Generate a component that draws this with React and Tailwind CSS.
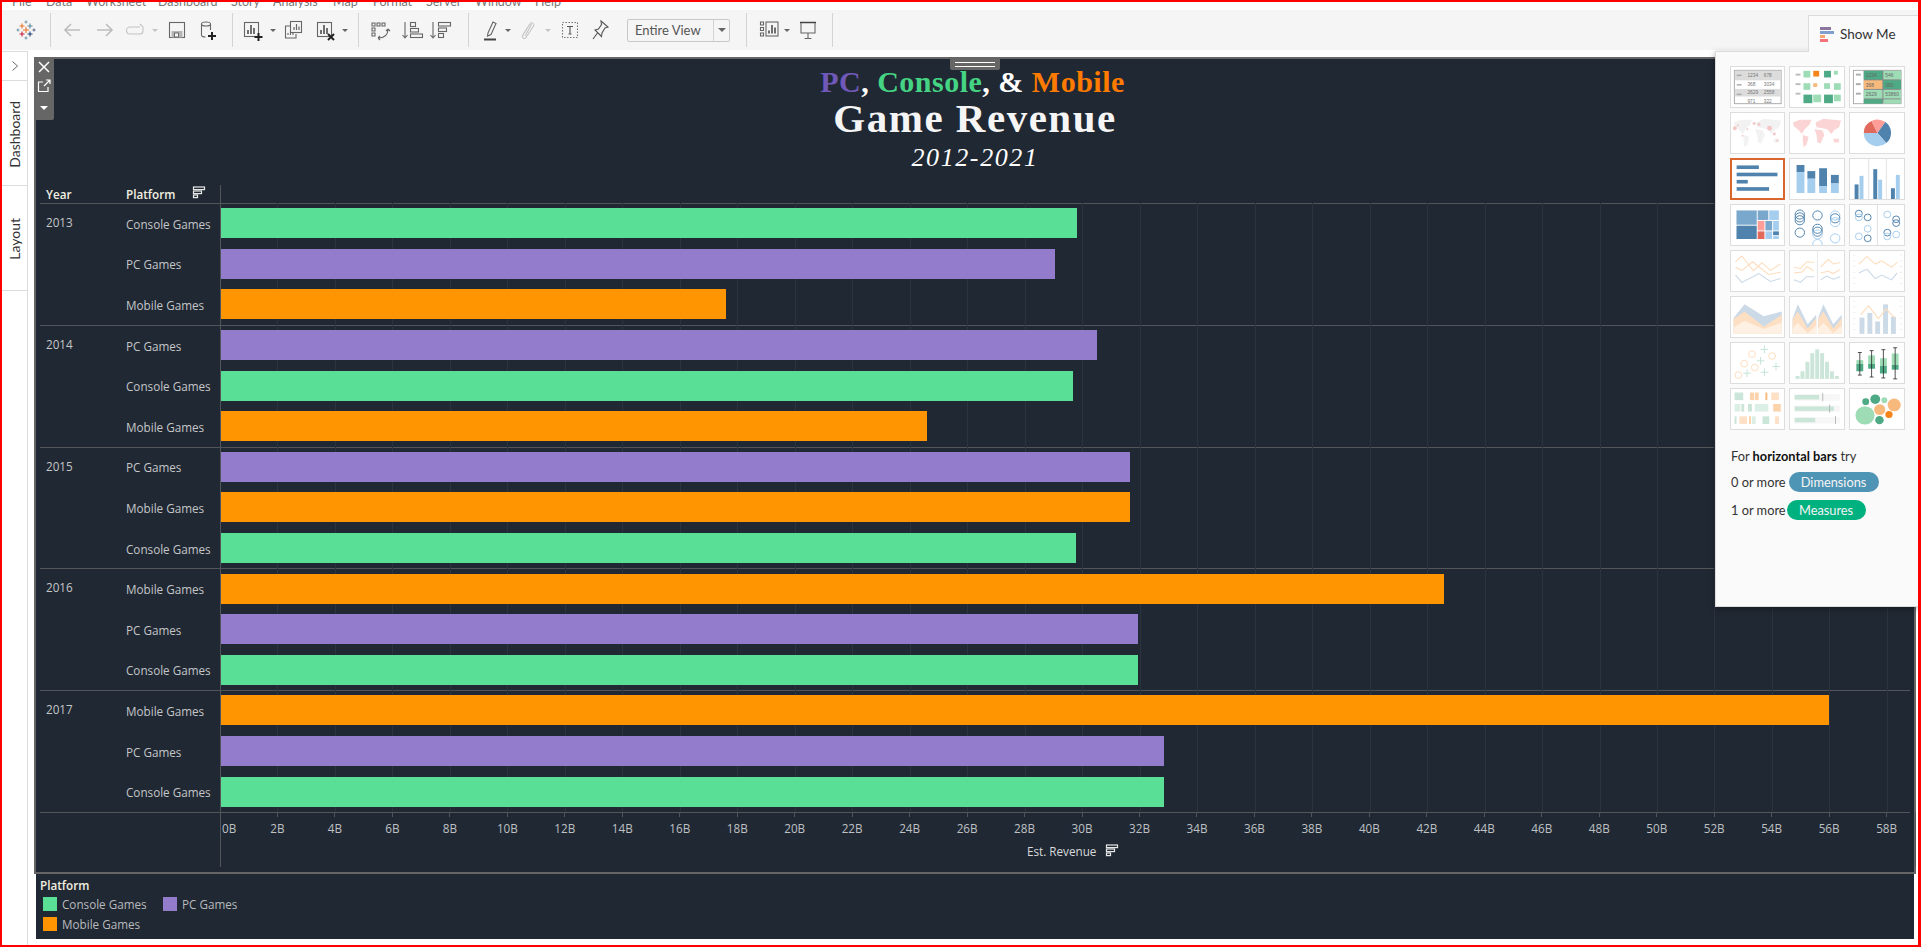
const PX = 28.72
const TICK = 28.74
const GREEN = '#5adf97'
const PURPLE = '#937ccb'
const ORANGE = '#ff9500'

const sections = [
  { year: 2013, rows: [['Console Games', 29.8, GREEN], ['PC Games', 29.04, PURPLE], ['Mobile Games', 17.58, ORANGE]] },
  { year: 2014, rows: [['PC Games', 30.5, PURPLE], ['Console Games', 29.67, GREEN], ['Mobile Games', 24.58, ORANGE]] },
  { year: 2015, rows: [['PC Games', 31.65, PURPLE], ['Mobile Games', 31.65, ORANGE], ['Console Games', 29.77, GREEN]] },
  { year: 2016, rows: [['Mobile Games', 42.58, ORANGE], ['PC Games', 31.93, PURPLE], ['Console Games', 31.93, GREEN]] },
  { year: 2017, rows: [['Mobile Games', 55.99, ORANGE], ['PC Games', 32.83, PURPLE], ['Console Games', 32.83, GREEN]] },
]

const ticks = Array.from({ length: 30 }, (_, i) => i * 2)
const menu = [['File', 'w-[34px]'], ['Data', 'w-[40px]'], ['Worksheet', 'w-[72px]'], ['Dashboard', 'w-[73px]'], ['Story', 'w-[42px]'], ['Analysis', 'w-[60px]'], ['Map', 'w-[40px]'], ['Format', 'w-[53px]'], ['Server', 'w-[49px]'], ['Window', 'w-[60px]'], ['Help', 'w-[40px]']]

function SortIcon({ className = '' }) {
  return (
    <svg className={className} width="15" height="14" viewBox="0 0 15 14" fill="none" stroke="#e8e8e8" strokeWidth="1.2">
      <rect x="1.5" y="1" width="11" height="2.6" />
      <rect x="1.5" y="5" width="8" height="2.6" />
      <rect x="1.5" y="9" width="4" height="2.6" />
    </svg>
  )
}

function Plus({ x, y }) {
  return <path d={`M${x - 4} ${y}h8M${x} ${y - 4}v8`} stroke="#222" strokeWidth="2" fill="none" />
}

function Tool({ className = '', children }) {
  return (
    <div className={`w-[24px] h-[24px] shrink-0 ${className}`}>
      <svg width="24" height="24" viewBox="0 0 24 24" fill="none" stroke="#666" strokeWidth="1.1">{children}</svg>
    </div>
  )
}

function Caret({ className = '', light }) {
  return (
    <div className={`w-[8px] flex justify-center shrink-0 ${className}`}>
      <div className={`w-0 h-0 border-x-[3px] border-x-transparent border-t-[3px] ${light ? 'border-t-[#c4c4c4]' : 'border-t-[#666]'}`} />
    </div>
  )
}

function Divider({ className = '' }) {
  return <div className={`w-px h-[34px] bg-[#d4d4d4] shrink-0 ${className}`} />
}

function TableauLogo() {
  const marks = [
    [3, 8, '#e8762b', 2.5], [11, 8, '#5b879b', 2.5], [7, 12, '#e8762b', 3], [3, 16, '#c72035', 2.5], [11, 16, '#1f447a', 2.5],
    [7, 4, '#7099a6', 1.5], [7, 20, '#7099a6', 1.5], [-1, 12, '#7099a6', 1.5], [15, 12, '#5b6591', 1.5],
  ]
  return (
    <svg width="20" height="24" viewBox="-3 0 20 24" fill="none">
      {marks.map(([x, y, c, s], i) => (
        <path key={i} d={`M${x - s} ${y}h${s * 2}M${x} ${y - s}v${s * 2}`} stroke={c} strokeWidth="1.1" />
      ))}
    </svg>
  )
}

function Toolbar() {
  return (
    <div className="h-[40px] bg-[#f5f5f5] flex items-center shrink-0 relative">
      <div className="w-[48px] flex justify-center shrink-0"><TableauLogo /></div>
      <Divider />
      <Tool className="ml-[9px]"><path d="M20 12H5M11 6l-6 6 6 6" stroke="#bdbdbd" strokeWidth="1.6" /></Tool>
      <Tool className="ml-[9px]"><path d="M4 12h15M13 6l6 6-6 6" stroke="#bdbdbd" strokeWidth="1.6" /></Tool>
      <Tool className="ml-[6px]"><path d="M17 9H7a3 3 0 0 0 0 7h10a3 3 0 0 0 3-3V9M17 6l3 3" stroke="#c4c4c4" /></Tool>
      <Caret light className="ml-[4px]" />
      <Tool className="ml-[6px]"><rect x="4.5" y="4.5" width="15" height="15" /><rect x="6.5" y="13" width="11" height="6.5" fill="#b5b5b5" stroke="none" /><rect x="9.5" y="15" width="4" height="4" fill="#f5f5f5" stroke="#555" strokeWidth=".8" /></Tool>
      <Tool className="ml-[6px]"><ellipse cx="11" cy="6" rx="4.5" ry="2" /><path d="M6.5 6v11c0 1.5 2 2 4 2M15.5 6v6" /><Plus x={17} y={18} /></Tool>
      <Divider className="ml-[13px]" />
      <Tool className="ml-[7px]"><rect x="4.5" y="4.5" width="14" height="14" /><path d="M8 16v-4M11 16V7M14 16v-6" stroke="#444" strokeWidth="1.5" /><Plus x={18.5} y={19} /></Tool>
      <Caret className="ml-[5px]" />
      <Tool className="ml-[4px]"><rect x="9.5" y="3.5" width="11" height="11" fill="#f5f5f5" /><path d="M13 12v-3M15.5 12V6M18 12V8.5" strokeWidth="1.2" /><path d="M9 8H4.5v12H15v-4" /><path d="M7 17v-2M9.5 17v-3M12 17v-2" strokeWidth="1.1" /></Tool>
      <Tool className="ml-[8px]"><rect x="4.5" y="4.5" width="14" height="14" /><path d="M8 16v-4M11 16V7M14 16v-6" stroke="#444" strokeWidth="1.5" /><path d="M15 16l6 6M21 16l-6 6" stroke="#222" strokeWidth="2" /></Tool>
      <Caret className="ml-[4px]" />
      <Divider className="ml-[9px]" />
      <Tool className="ml-[9px]"><path d="M4 5h3v3H4zM9 5h3v3H9zM14 5h3v3h-3zM4 10h3v3H4zM4 15h3v3H4z" /><path d="M20 11c0 6-4 9-10 9M20 11l-2 2M20 11l2 2M10 20l2-2M10 20l2 2" /></Tool>
      <Tool className="ml-[9px]"><path d="M4 4v15M1.5 17L4 20l2.5-3" /><rect x="9.5" y="4.5" width="5" height="4" /><rect x="9.5" y="10.5" width="8" height="3.5" /><rect x="9.5" y="16" width="12" height="3.5" /></Tool>
      <Tool className="ml-[4px]"><path d="M4 4v15M1.5 17L4 20l2.5-3" /><rect x="9.5" y="4.5" width="12" height="3.5" /><rect x="9.5" y="10" width="8" height="3.5" /><rect x="9.5" y="15.5" width="5" height="4" /></Tool>
      <Divider className="ml-[15px]" />
      <Tool className="ml-[9px]"><path d="M10 15l5-11 3 1.5-5 11-3.5 1.5z" /><path d="M6 21.5h12" stroke="#444" strokeWidth="2" /></Tool>
      <Caret className="ml-[2px]" />
      <Tool className="ml-[4px]"><path d="M7 17l7-11c1.5-2.5 5-.5 3.5 2l-7.5 11.5c-1.5 2-4.5.5-3.5-2l7-11c.8-1 2 0 1.5 1L9 18" stroke="#c4c4c4" /></Tool>
      <Caret light className="ml-[4px]" />
      <Tool className="ml-[6px]"><rect x="4.5" y="4.5" width="15" height="15" strokeDasharray="1.5 1.5" stroke="#777" /><path d="M9 8.5h6M12 8.5v7.5M10.5 16h3" stroke="#555" /></Tool>
      <Tool className="ml-[6px]"><path d="M13 3l7 6-3 1-3 5-.5 3.5L7 12l3.5-1 3-4.5zM9.5 15L5 21" stroke="#555" /></Tool>
      <div className="ml-[15px] w-[103px] h-[23px] border border-[#c8c8c8] rounded-[2px] flex items-center shrink-0">
        <span className="pl-[7px] w-[85px] text-[13px] leading-none text-[#555] font-['Lato',sans-serif]">Entire View</span>
        <div className="w-px h-full bg-[#d4d4d4]" />
        <div className="flex-1 flex justify-center"><div className="w-0 h-0 border-x-[4px] border-x-transparent border-t-[4px] border-t-[#666]" /></div>
      </div>
      <Divider className="ml-[16px]" />
      <Tool className="ml-[11px]"><path d="M2.5 4h3v3h-3zM2.5 9.5h3v3h-3zM2.5 15h3v3h-3z" /><rect x="8" y="4" width="12" height="14" /><path d="M11 15.5v-3M14 15.5V7M17 15.5v-6" stroke="#444" strokeWidth="1.5" /></Tool>
      <Caret className="ml-[1px]" />
      <Tool className="ml-[5px]"><path d="M4 4.5h16" stroke="#444" strokeWidth="1.5" /><path d="M5 5v10h14V5M12 15v5M8.5 20.5h7" /></Tool>
      <Divider className="ml-[12px]" />
    </div>
  )
}

const BD = '#4f82ad'
const BL = '#a5cdee'
const GD = '#4eaa84'
const GL = '#9edcb6'
const OD = '#f58518'
const OL = '#f7b97c'
const LO = '#fdddbd'
const LB = '#c9d8e8'
const PG = '#cbe5d9'

const R = ({ x, y, w, h, f }) => <rect x={x} y={y} width={w} height={h} fill={f} />
const L = ({ p, c }) => <polyline points={p} fill="none" stroke={c} strokeWidth="1.1" />
const P = ({ p, c }) => <polygon points={p} fill={c} />

function WorldMap({ c }) {
  return (
    <g fill={c}>
      <path d="M3 10L10 7L22 7L20 12L15 17L12 22L9 18L4 14Z" />
      <path d="M13 23L19 25L17 33L14 36L13 29Z" />
      <path d="M26 10L34 6L52 8L50 15L45 18L42 22L38 17L33 16L27 15Z" />
      <path d="M25 17L33 18L35 23L31 32L28 31L27 23Z" />
      <path d="M44 27L50 27L50 31L45 31Z" />
    </g>
  )
}

const tableRows = [['1234', '678'], ['368', '3034'], ['2629', '2558'], ['971', '322']]
const heatCells = [
  [13.7, 4, 7, GL], [23.7, 4, 6, OD], [34.7, 4, 7, GD], [44.7, 4, 4, GL],
  [13.7, 17, 7, GL], [23.7, 17, 4, OL], [34.7, 17, 6, GL], [44.7, 17, 7, GL],
  [13.7, 29, 9, GD], [23.7, 29, 8, GL], [34.7, 29, 9, GD], [44.7, 29, 7, GL],
]
const highlight = [[GD, GL], [OL, GD], [GL, GL], [GD, GL]]

const thumbs = [
  <g key="1">
    <rect x="3.5" y="3.5" width="48.5" height="35" fill="none" stroke="#aaa" />
    <R x={4} y={4} w={48} h={10} f="#dcdcdc" /><R x={4} y={23} w={48} h={8} f="#dcdcdc" />
    {tableRows.map((r, i) => (
      <g key={i} fontSize="5" fill="#777" fontFamily="Liberation Sans, sans-serif">
        {i < 3 && <R x={6} y={8 + i * 10} w={5} h={1.5} f="#aaa" />}
        <text x="17" y={10.5 + i * 9}>{r[0]}</text>
        <text x="34" y={10.5 + i * 9}>{r[1]}</text>
      </g>
    ))}
  </g>,
  <g key="2">
    {[8, 18, 28].map(y => <R key={y} x={5.7} y={y - 1} w={5} h={2} f="#bbb" />)}
    {heatCells.map(([x, y, s, f], i) => <R key={i} x={x} y={y} w={s} h={s} f={f} />)}
  </g>,
  <g key="3">
    <rect x="3.5" y="3.5" width="48.5" height="35" fill="#888" stroke="#aaa" />
    <R x={4} y={4} w={10} h={34} f="#fff" />
    {[8, 18, 28].map(y => <R key={y} x={6} y={y - 1} w={5} h={2} f="#aaa" />)}
    {highlight.map((r, i) => (
      <g key={i} fontSize="5" fill="#666" fontFamily="Liberation Sans, sans-serif">
        <R x={14} y={4 + i * 10} w={19} h={i === 3 ? 4.5 : 9} f={r[0]} />
        <R x={34} y={4 + i * 10} w={18} h={i === 3 ? 4.5 : 9} f={r[1]} />
        {i < 3 && <text x="16" y={10.5 + i * 10}>{['1234', '368', '2629'][i]}</text>}
        {i < 3 && <text x="36" y={10.5 + i * 10}>{['546', '380', '53860'][i]}</text>}
      </g>
    ))}
  </g>,
  <g key="4">
    <WorldMap c="#f2f2f2" />
    {[[4, 16, 2], [24, 11, 1.5], [7, 13, 1], [40, 16, 2.5], [29, 12, 1.5], [12, 24, 1], [45, 22, 1.5], [48, 29, 1.2], [17, 17, 1]].map(([x, y, r], i) => (
      <circle key={i} cx={x} cy={y} r={r} fill="#f3c5c5" />
    ))}
  </g>,
  <g key="5"><WorldMap c="#fbd5d5" /></g>,
  <g key="6">
    <path d="M28 21L14 21A14 14 0 0 1 22 8.3Z" fill="#e26a5c" />
    <path d="M28 21L22 8.3A14 14 0 0 1 36 9.5Z" fill="#ff9d98" />
    <path d="M28 21L36 9.5A14 14 0 0 1 37 31.5Z" fill={BD} />
    <path d="M28 21L37 31.5A14 14 0 0 1 14 21Z" fill={BL} />
  </g>,
  <g key="7" fill={BD}>
    <rect x="5" y="6" width="24" height="4" /><rect x="5" y="14" width="44" height="4" />
    <rect x="5" y="22" width="12" height="4" /><rect x="5" y="30" width="35" height="4" />
  </g>,
  <g key="8">
    {[[6.7, 6.3, 13.7], [17.7, 12.7, 20.7], [29.7, 9.7, 28.7], [41.7, 16.7, 25.7]].map(([x, a, b]) => (
      <g key={x}><R x={x} y={a} w={8} h={b - a} f={BD} /><R x={x} y={b} w={8} h={35.7 - b} f={BL} /></g>
    ))}
  </g>,
  <g key="9">
    <path d="M19 0v42M37 0v42" stroke="#d8d8d8" strokeWidth=".8" />
    {[[4.7, 26.7, BD], [9.7, 17.7, BL], [23.7, 10.7, BD], [28.7, 21.7, BL], [41.7, 30.7, BD], [46.7, 16.7, BL]].map(([x, y, f]) => (
      <R key={x} x={x} y={y} w={4} h={42 - y} f={f} />
    ))}
  </g>,
  <g key="10">
    <R x={5.7} y={5.7} w={21} h={15} f="#7aa7cc" /><R x={5.7} y={21.7} w={21} h={14} f={BD} />
    <R x={27.7} y={5.7} w={11} h={10} f="#7aa7cc" /><R x={39.7} y={5.7} w={10} h={10} f={BL} />
    <R x={27.7} y={16.7} w={7} h={10} f="#ff9d98" /><R x={27.7} y={27.7} w={7} h={8} f="#e26a5c" />
    <R x={35.7} y={16.7} w={7} h={10} f="#7aa7cc" /><R x={43.7} y={16.7} w={6} h={10} f={BL} />
    <R x={35.7} y={27.7} w={7} h={8} f={BL} /><R x={43.7} y={27.7} w={6} h={4} f={BD} /><R x={43.7} y={32.7} w={6} h={3} f={BL} />
  </g>,
  <g key="11" fill="none" strokeWidth="1">
    {[[10, 10, BD], [10, 13, BD], [10, 16, BD], [28, 11, BD], [46, 11, BL], [46, 14, BD], [46, 18, BL], [10, 29, BD], [28, 25, BD], [28, 28, BD], [28, 31, BL], [46, 35, BL], [28, 41, BL]].map(([x, y, c], i) => (
      <circle key={i} cx={x} cy={y} r="4.8" stroke={c} />
    ))}
  </g>,
  <g key="12" fill="none" strokeWidth="1">
    <path d="M28 0v42" stroke="#d8d8d8" strokeWidth=".8" />
    {[[9, 9, BD], [9, 13, BL], [18, 13, BD], [18, 25, BL], [9, 33, BL], [18, 35, BD], [38, 10, BL], [47, 15, BD], [47, 19, BD], [38, 29, BD], [38, 33, BL], [47, 31, BL]].map(([x, y, c], i) => (
      <circle key={i} cx={x} cy={y} r="3.5" stroke={c} />
    ))}
  </g>,
  <g key="13">
    <L p="4.7,11.3 11.3,5.3 23.3,20.7 32.3,12.3 40.7,20.3 51.3,13.7" c={LO} />
    <L p="4.7,17 11.3,20.3 22.3,11.3 39,24.7 51.3,22.3" c={LO} />
    <L p="4.7,25.3 11.3,33 29,23.7 40.7,32 51.3,29" c={LB} />
  </g>,
  <g key="14">
    <path d="M28 0v42" stroke="#e2e2e2" strokeWidth=".8" />
    <L p="4,17 10.7,18.3 17.3,11.3 24.7,12" c={LO} /><L p="4,23 12.3,22 17.3,16.3 24,21" c={LO} /><L p="4,30.3 10.7,33 16.7,27 24.7,27" c={LB} />
    <L p="31.3,17 39,8.7 44,13.7 51.3,12" c={LO} /><L p="31.3,23 39,21.3 44,23.7 51.3,19.3" c={LO} /><L p="31.3,30.3 37.3,26.3 44,29.7 51.3,27" c={LB} />
  </g>,
  <g key="15">
    {[4, 10, 16, 22, 28, 34].map(y => <g key={y}><R x={3} y={y} w={2.5} h={.6} f="#e4e4e4" /><R x={50.5} y={y} w={3} h={.6} f="#e4e4e4" /></g>)}
    <L p="9,13.7 17.3,5.7 25.7,13.7 32.3,10.3 42.3,17 48,12" c={LO} />
    <L p="9,23 17.3,19 25.7,29 32.3,25.3 42.3,30.3 48,23" c={LB} />
  </g>,
  <g key="16">
    <P p="2.7,22 14,7.7 34,20.3 52.7,15.3 52.7,38.7 2.7,38.7" c="#ccd9e6" />
    <P p="2.7,23 14,15.3 34,31 52.7,18.7 52.7,38.7 2.7,38.7" c="#fddfc4" />
    <P p="2.7,32 14,25.3 34,33.7 52.7,27 52.7,38.7 2.7,38.7" c="#fef1e3" />
  </g>,
  <g key="17">
    {[0, 26].map(d => (
      <g key={d} transform={`translate(${d} 0)`}>
        <P p="2.7,22 8,7.7 18,28.7 26.7,18.7 26.7,38.7 2.7,38.7" c="#ccd9e6" />
        <P p="2.7,23 8,15.3 18,33 26.7,22 26.7,38.7 2.7,38.7" c="#fddfc4" />
        <P p="2.7,33 8,27 18,38 26.7,30 26.7,38.7 2.7,38.7" c="#fef1e3" />
      </g>
    ))}
  </g>,
  <g key="18">
    {[4, 10, 16, 22, 28, 34].map(y => <g key={y}><R x={3} y={y} w={2.5} h={.6} f="#e4e4e4" /><R x={50.5} y={y} w={3} h={.6} f="#e4e4e4" /></g>)}
    {[[9.7, 21.7], [17.7, 16.7], [25.7, 25.7], [33.7, 7.7], [41.7, 20.7]].map(([x, y]) => <R key={x} x={x} y={y} w={5} h={38.7 - y} f="#ccd9e6" />)}
    <L p="10.7,18.7 19,9.3 29,22.7 36.7,12.7 45.7,22" c={LO} />
  </g>,
  <g key="19" fill="none" strokeWidth="1">
    {[[21.7, 11.7], [42.7, 13.7], [13.7, 21.7], [24.7, 25.7], [7.7, 33.7]].map(([x, y]) => <circle key={x} cx={x} cy={y} r="3.5" stroke={LO} />)}
    {[[34.7, 6.7], [30.7, 18.7], [46.7, 24.7], [16.7, 31.7], [34.7, 30.7]].map(([x, y]) => <path key={x} d={`M${x - 4} ${y}h8M${x} ${y - 4}v8`} stroke="#c3e3d5" />)}
  </g>,
  <g key="20">
    {[34.7, 29.7, 19.7, 10.7, 6.7, 10.7, 19.7, 29.7, 34.7].map((y, i) => <R key={i} x={5.7 + i * 5} y={y} w={4} h={37.7 - y} f={PG} />)}
  </g>,
  <g key="21">
    {[[10, 10, 33.7, 18, 22, 29.7], [22, 8, 35.7, 13, 22, 27], [34, 7, 36.7, 16, 24, 32], [46, 5, 37.7, 11, 23, 28]].map(([x, a, b, t, m, e]) => (
      <g key={x}>
        <R x={x - 3.5} y={t} w={7} h={m - t} f={GL} /><R x={x - 3.5} y={m} w={7} h={e - m} f={GD} />
        <path d={`M${x} ${a}V${b}M${x - 2} ${a}h4M${x - 2} ${b}h4`} stroke="#222" strokeWidth=".8" fill="none" />
      </g>
    ))}
  </g>,
  <g key="22">
    <R x={3.7} y={3.7} w={9} h={8} f={PG} /><R x={19.7} y={3.7} w={4.3} h={8} f="#fbd4ae" /><R x={24.7} y={3.7} w={4} h={8} f="#fbd4ae" /><R x={35.7} y={3.7} w={2} h={8} f={OL} /><R x={41.7} y={3.7} w={8} h={8} f="#fde0c6" />
    <R x={3.7} y={15.7} w={6} h={8} f="#dcefe6" /><R x={10.7} y={15.7} w={3} h={8} f={PG} /><R x={17.7} y={15.7} w={4} h={8} f={PG} /><R x={24.7} y={15.7} w={14} h={8} f="#dcefe6" /><R x={43.7} y={15.7} w={8} h={8} f="#fbd4ae" />
    <R x={3.7} y={28.7} w={2} h={8} f={PG} /><R x={8.7} y={28.7} w={8} h={8} f="#fde0c6" /><R x={18.7} y={28.7} w={2} h={8} f="#fbd4ae" /><R x={21.7} y={28.7} w={4} h={8} f="#dcefe6" /><R x={32.7} y={28.7} w={7} h={8} f={PG} /><R x={45.7} y={28.7} w={4} h={8} f="#fde0c6" />
  </g>,
  <g key="23">
    {[[6.3, 25, 33], [18.3, 40, 40], [30.3, 21, 46]].map(([y, w, t]) => (
      <g key={y}>
        <R x={4.7} y={y - 1} w={46} h={7} f="#f7f7f7" />
        <R x={4.7} y={y} w={w} h={4.7} f={PG} />
        <R x={t} y={y - 2} w={.8} h={8.5} f="#aaa" />
      </g>
    ))}
  </g>,
  <g key="24">
    {[[15.3, 27.7, 9.7, GL], [16, 13.3, 3.5, GD], [25.7, 10.7, 5, GD], [35, 11.7, 3, GL], [30.3, 21.7, 5.7, OL], [45, 16.7, 6.7, OL], [39.7, 26.7, 3.7, OD], [30, 32.7, 4.3, GD]].map(([x, y, r, f]) => (
      <circle key={x} cx={x} cy={y} r={r} fill={f} />
    ))}
  </g>,
]

function ShowMe() {
  return (
    <div className="absolute right-0 top-[-35px] z-30 w-[203px] flex flex-col items-end font-['Lato',sans-serif]">
      <div className="relative z-10 -mb-px w-[110px] h-[37px] bg-[#fafafa] border-l border-t border-[#dcdcdc] flex items-center pl-[11px] gap-[6px]">
        <div className="w-[14px] flex flex-col gap-px">
          <div className="h-[3px] w-[11px] bg-[#8b76a0]" />
          <div className="h-[3px] w-[14px] bg-[#7fa0cc]" />
          <div className="h-[3px] w-[5px] bg-[#f7a470]" />
          <div className="h-[3px] w-[8px] bg-[#f4737a]" />
        </div>
        <span className="text-[13.5px] text-[#333]">Show Me</span>
      </div>
      <div className="w-[203px] h-[556px] bg-[#fafafa] border-l border-t border-b border-[#dcdcdc] shadow-[0_2px_6px_rgba(0,0,0,0.35)] pt-[14px] pl-[14px]">
        <div className="grid grid-cols-[55px_56px_56px] auto-rows-[42px] gap-x-[4px] gap-y-[4px]">
          {thumbs.map((t, i) => (
            <div key={i} className={`bg-white overflow-hidden ${i === 6 ? 'border-2 border-[#d9662e]' : 'border border-[#dddddd]'}`}>
              <svg className="block w-full h-full" viewBox="0 0 55 42" preserveAspectRatio="none">{t}</svg>
            </div>
          ))}
        </div>
        <div className="mt-[18px] pl-[1px] text-[12.8px] leading-[16px] text-[#333]">
          <p>For <b className="font-bold text-[#111]">horizontal bars</b> try</p>
          <div className="mt-[8px] flex items-center gap-[3px] h-[20px]">
            <span>0 or more</span>
            <span className="h-[20px] w-[90px] rounded-full bg-[#4e94b4] text-[#f4f4f4] flex items-center justify-center">Dimensions</span>
          </div>
          <div className="mt-[8px] flex items-center gap-[3px] h-[20px]">
            <span>1 or more</span>
            <span className="-ml-[2px] h-[20px] w-[79px] rounded-full bg-[#00b180] text-[#f4f4f4] flex items-center justify-center">Measures</span>
          </div>
        </div>
      </div>
    </div>
  )
}

function Sidebar() {
  return (
    <div className="w-[26px] shrink-0 border-r border-[#dcdcdc] mt-px flex flex-col text-[14px] text-[#333] font-['Lato',sans-serif]">
      <div className="h-[29px] border-t border-[#dcdcdc] flex items-center justify-center">
        <svg width="8" height="12" viewBox="0 0 8 12" fill="none" stroke="#666"><path d="M1.5 1.5L6.5 6l-5 4.5" /></svg>
      </div>
      <div className="h-[105px] border-t border-[#dcdcdc] flex items-center justify-center">
        <span className="[writing-mode:vertical-rl] rotate-180 translate-y-px">Dashboard</span>
      </div>
      <div className="h-[106px] border-y border-[#dcdcdc] flex items-center justify-center">
        <span className="[writing-mode:vertical-rl] rotate-180 translate-y-px">Layout</span>
      </div>
    </div>
  )
}

function PanelControls() {
  return (
    <div className="absolute left-[-2px] top-0 z-20 w-[20px] h-[61px] bg-[#666] rounded-br-[2px] flex flex-col items-center pt-[1px] gap-[5px]">
      <svg width="14" height="14" viewBox="0 0 14 14" fill="none" stroke="#fff" strokeWidth="1.5"><path d="M2 2l10 10M12 2L2 12" /></svg>
      <svg width="14" height="14" viewBox="0 0 14 14" fill="none" stroke="#fff" strokeWidth="1.2"><path d="M6 3H1.5v9.5H11V8M7 7l6-6M9 1h4v4" /></svg>
      <div className="mt-[8px] w-0 h-0 border-x-[4px] border-x-transparent border-t-[4px] border-t-white" />
    </div>
  )
}

function Section({ year, rows }) {
  return (
    <div className="h-[121.8px] flex shadow-[inset_0_1px_0_#52565b]">
      <div className="w-[86px] pl-[6px] pt-[11px] text-[11.7px] leading-[16px] text-[#c4c6c8] shrink-0">{year}</div>
      <div className="flex-1 flex flex-col">
        {rows.map(([name, value, color]) => (
          <div key={name} className="h-[40.6px] flex items-center">
            <div className="w-[94px] pt-[1px] text-[11.7px] leading-[16px] text-[#c4c6c8] shrink-0 whitespace-nowrap">{name}</div>
            <div className="flex-1 h-full border-l border-[#52565b] flex items-center">
              <div className="h-[30px] relative z-10" style={{ width: value * PX, backgroundColor: color }} />
            </div>
          </div>
        ))}
      </div>
    </div>
  )
}

function Chart() {
  return (
    <div className="relative ml-[4px] w-[1870px] font-['Open_Sans',sans-serif]">
      {/* grid lines run under the bars */}
      <div className="absolute left-[180px] top-[18px] h-[609px]">
        {ticks.slice(1).map(t => (
          <div key={t} className="absolute top-0 bottom-0 w-px bg-[#2b333e]" style={{ left: t * TICK }} />
        ))}
      </div>
      <div className="h-[18px] flex pt-[1px] text-[11.7px] leading-[16px] text-[#f3efe0]">
        <div className="w-[86px] pl-[6px] font-semibold">Year</div>
        <div className="w-[94px] flex items-start gap-[17px] font-semibold">Platform<SortIcon /></div>
        <div className="flex-1 border-l border-[#52565b] -mt-[1px]" />
      </div>
      {sections.map(s => <Section key={s.year} {...s} />)}
      <div className="h-[55px] shadow-[inset_0_1px_0_#52565b] flex">
        <div className="w-[180px] shrink-0" />
        <div className="flex-1 border-l border-r border-[#52565b]">
          <div className="flex text-[11.7px] leading-[16px] text-[#bfc1c4]">
            {ticks.map(t => (
              <div key={t} className={`flex flex-col shrink-0 ${t === 0 ? 'w-[27.74px] items-start' : 'w-[57.48px] items-center'}`}>
                <div className={`w-px h-[5px] ${t === 0 ? 'bg-transparent' : 'bg-[#52565b]'}`} />
                <span className={t === 0 ? 'mt-[3px] pl-[1px]' : 'mt-[3px]'}>{t}B</span>
              </div>
            ))}
          </div>
          <div className="mt-[7px] pl-[806px] flex items-center gap-[9px] text-[11.7px] leading-[16px] text-[#d8dadc] whitespace-nowrap">
            Est. Revenue<SortIcon />
          </div>
        </div>
      </div>
    </div>
  )
}

export default function App() {
  return (
    <div className="w-[1921px] h-[947px] overflow-hidden bg-white border-2 border-r-[3px] border-[#ff0000] flex flex-col">
      <div className="h-[8px] shrink-0 overflow-hidden">
        <div className="-mt-[9px] ml-[10px] flex text-[12.5px] leading-[18px] text-[#777] font-['Lato',sans-serif]">
          {menu.map(([m, c]) => <span key={m} className={`${c} shrink-0`}>{m}</span>)}
        </div>
      </div>
      <Toolbar />
      <div className="flex-1 flex relative min-h-0">
        <ShowMe />
        <Sidebar />
        <div className="ml-[6px] mr-[2px] flex-1 pt-[7px] flex flex-col min-w-0">
          <div className="relative h-[817px] bg-[#202833] border-2 border-[#666]">
            <PanelControls />
            <div className="absolute left-1/2 -translate-x-1/2 top-0 z-20 w-[50px] h-[11px] bg-[#666] rounded-b-[2px] flex flex-col items-center pt-[3px] gap-[3px]">
              <div className="w-[40px] h-px bg-white" />
              <div className="w-[40px] h-px bg-white" />
            </div>
            <div className="h-[126px] pt-[7px] text-center font-['Liberation_Serif',serif]">
              <div className="h-[32px] pr-[5px] text-[30px] leading-[32px] font-bold tracking-[0.5px] text-white">
                <span className="text-[#7058b8]">PC</span>, <span className="text-[#45d483]">Console</span>, &amp; <span className="text-[#ff7b00]">Mobile</span>
              </div>
              <div className="h-[40px] text-[41px] leading-[40px] font-bold tracking-[1.5px] text-[#f5f5f5]">Game Revenue</div>
              <div className="h-[40px] text-[26px] leading-[40px] italic tracking-[1.6px] text-white">2012-2021</div>
            </div>
            <Chart />
          </div>
          <div className="h-[65px] mx-[2px] bg-[#202833] pl-[4px] pt-[3px] text-[11.7px] leading-[16px] font-['Open_Sans',sans-serif]">
            <div className="font-semibold text-[#f3efe0]">Platform</div>
            <div className="mt-[4px] flex items-center h-[14px] text-[#b8babd]">
              <div className="ml-[3px] w-[14px] h-[14px] bg-[#5adf97]" />
              <span className="ml-[5px] w-[101px]">Console Games</span>
              <div className="w-[14px] h-[14px] bg-[#937ccb]" />
              <span className="ml-[5px]">PC Games</span>
            </div>
            <div className="mt-[6px] flex items-center h-[14px] text-[#b8babd]">
              <div className="ml-[3px] w-[14px] h-[14px] bg-[#ff9500]" />
              <span className="ml-[5px]">Mobile Games</span>
            </div>
          </div>
        </div>
      </div>
    </div>
  )
}
